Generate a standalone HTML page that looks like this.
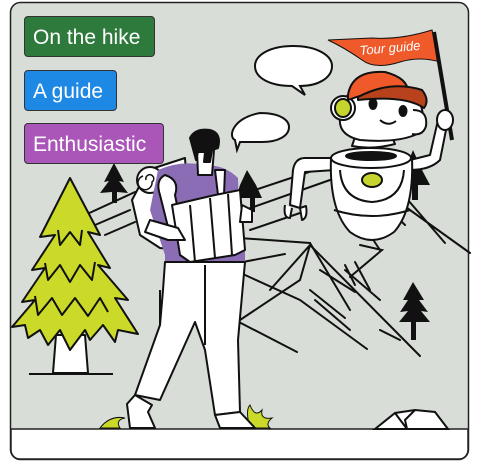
<!DOCTYPE html>
<html><head><style>
html,body{margin:0;padding:0;background:#fff;}
body{width:482px;height:464px;position:relative;overflow:hidden;font-family:"Liberation Sans",sans-serif;}
.lbl{position:absolute;left:24px;height:41px;border:1.5px solid #333;border-radius:4px;color:#fff;font-size:21px;line-height:41px;padding:0 8px;box-sizing:border-box;}
</style></head><body>
<svg width="482" height="464" style="position:absolute;left:0;top:0" xmlns="http://www.w3.org/2000/svg">
<rect x="10.5" y="2.5" width="458" height="457" rx="10" fill="#d8ded7" stroke="#222" stroke-width="1.5"/>
<path d="M11 429 H468 V450 a9 9 0 0 1 -9 9 H20 a9 9 0 0 1 -9 -9 Z" fill="#fff" stroke="#222" stroke-width="1.5"/>
<g stroke="#111" stroke-width="2" fill="none" stroke-linecap="round">
<path d="M85 215 L135 192 M95 225 L130 210 M105 235 L135 222"/>
<path d="M240 195 L330 165 M245 210 L330 180 M250 230 L300 213"/>
<path d="M225 237 L310 243 L350 310 M227 265 L285 254 M270 290 L310 245 L300 280 L240 320"/>
<path d="M245 275 L300 300 L367 349 M235 320 L297 352 M310 245 L420 356 M310 290 L345 318 M320 270 L355 292 M315 300 L350 330 M345 270 L380 300 M380 330 L400 340"/>
<path d="M382 190 L470 253 M395 185 L445 243 M390 210 L405 225 M370 235 L380 250 M360 245 L382 250 L350 277"/>
<path d="M345 265 L355 285 M355 262 L370 290"/>
</g>
<path d="M114 163 L104 182 L109 181 L100 193 L112 192 L112 203 L117 203 L117 192 L128 193 L119 181 L124 182 Z" fill="#111"/>
<path d="M413 282 L403 300 L408 300 L400 312 L408 311 L399 322 L411 322 L411 340 L416 340 L416 322 L430 322 L421 311 L428 312 L419 300 L424 300 Z" fill="#111"/>
<path d="M413 150 L405 170 L400 185 L412 185 L412 200 L418 200 L418 185 L430 185 L422 170 Z" fill="#111"/>
<path d="M247 170 L240 185 L236 198 L250 198 L250 212 L255 212 L255 198 L262 198 L256 185 Z" fill="#111"/>
<g stroke="#111" stroke-width="2" stroke-linejoin="round">
<path d="M56 335 L53 373 L88 373 L85 335 Z" fill="#fff"/>
<path d="M70 178 L100 235 L88 232 L110 268 L98 265 L128 300 L115 298 L138 334 L118 330 L115 342 L103 325 L90 340 L85 330 L70 350 L60 330 L48 345 L40 330 L28 338 L25 325 L12 327 L35 300 L22 302 L45 268 L32 270 L55 235 L40 237 Z" fill="#cbd928"/>
<path d="M58 230 L60 245 L70 232 L80 245 L82 230 M45 263 L48 280 L60 265 L70 282 L80 265 L92 280 L95 262 M35 296 L38 315 L52 298 L62 315 L75 298 L88 316 L100 298 L108 312" fill="none"/>
<path d="M29 374 H113" fill="none"/>
</g>
<path d="M100 428 Q110 415 125 418 Q115 420 120 428 Z M250 428 Q245 410 250 405 Q255 418 262 410 Q260 420 272 418 Q265 424 270 428 Z" fill="#cbd928" stroke="#111" stroke-width="1"/>
<path d="M375 429 L395 413 L415 410 L435 412 L448 429 Z M395 413 L407 429 M407 429 L405 420 L415 410" fill="#fff" stroke="#111" stroke-width="2"/>
<g stroke="#111" stroke-width="2" stroke-linejoin="round">
<path d="M148 170 L185 158 L190 230 L180 250 L160 248 L140 235 L132 200 Z" fill="#fff"/>
<circle cx="150" cy="180" r="13" fill="#fff"/>
<path d="M146 180 a4 4 0 1 1 6 2 a7 7 0 1 1 -9 -6" fill="none" stroke-width="1.5"/>
<path d="M165 250 L245 250 L245 262 L165 262 Z" fill="#8a6db5" stroke="none"/>
<path d="M165 262 L245 262 L238 340 L240 412 L215 415 L205 350 L195 322 L160 400 L135 395 L160 325 L163 290 Z" fill="#fff"/>
<path d="M205 265 L205 345 M160 325 L160 290" fill="none"/>
<path d="M135 395 L127 404 L130 428 L155 428 L148 412 L152 405 Z M215 415 L220 428 L255 428 L240 412 Z" fill="#fff"/>
<path d="M158 170 Q180 160 205 165 Q225 165 238 178 L240 250 L165 255 L150 210 Z" fill="#8a6db5" stroke="none"/>
<path d="M197 150 L198 175 L212 175 L214 150 Z" fill="#fff"/>
<path d="M190 138 Q195 128 210 130 Q222 133 218 148 L212 150 L210 162 L204 162 L205 152 L198 152 L196 160 Z" fill="#111"/>
<path d="M165 175 Q155 180 160 195 L170 235 L182 230 L175 195 Q180 180 165 175 Z" fill="#fff"/>
<path d="M215 170 L225 170 L224 195 L218 195 Z" fill="#fff"/>
<path d="M172 205 L215 195 L240 190 L245 250 L235 255 L190 262 L180 255 Z" fill="#fff"/>
<path d="M190 205 L195 262 M210 198 L215 258 M228 194 L232 255" fill="none"/>
<path d="M150 220 L178 228 L185 240 L168 240 L145 232 Z" fill="#fff"/>
<path d="M242 205 L252 210 L252 222 L240 222 Z" fill="#fff"/>
</g>
<path d="M293 46 C318 46 332 56 332 66 C332 78 318 86 300 86 L305 95 L292 86 C270 86 255 78 255 66 C255 55 270 46 293 46 Z" fill="#fff" stroke="#111" stroke-width="2"/>
<path d="M260 113 C280 113 289 120 289 127 C289 136 278 142 262 142 L240 142 L237 150 L235 140 C228 137 232 118 260 113 Z" fill="#fff" stroke="#111" stroke-width="2"/>
<path d="M328 40 L372 38 Q400 40 432 30 L440 62 Q420 56 400 62 Q375 70 362 60 Q345 48 328 40 Z" fill="#f05a2a" stroke="#111" stroke-width="1"/>
<text x="360" y="55" font-family="Liberation Sans,sans-serif" font-style="italic" font-size="13" fill="#fff" transform="rotate(-5 360 55)">Tour guide</text>
<path d="M434 32 L452 140" stroke="#111" stroke-width="4"/>
<g stroke="#111" stroke-width="2" stroke-linejoin="round">
<path d="M410 170 Q430 170 440 160 L447 125 L438 120 L430 155 L410 160 Z" fill="#fff"/>
<ellipse cx="445" cy="120" rx="8" ry="10" fill="#fff"/>
<path d="M335 158 L305 158 Q295 158 293 170 L290 205 L300 208 L305 172 L335 170 Z" fill="#fff"/>
<path d="M285 205 Q283 218 290 218 L292 208 M300 208 L302 220 Q308 218 306 206 Z" fill="#fff"/>
<path d="M331 158 Q329 210 350 232 Q372 248 394 232 Q414 210 412 158 Z" fill="#fff"/>
<ellipse cx="371" cy="158" rx="40" ry="10" fill="#fff"/>
<ellipse cx="371" cy="156" rx="25" ry="4" fill="#111"/>
<path d="M340 170 Q342 200 372 202 Q402 200 404 170" fill="none"/>
<path d="M334 210 Q372 222 410 210" fill="none"/>
<ellipse cx="372" cy="180" rx="10" ry="7" fill="#c6d52d"/>
<path d="M355 137 L352 146 Q372 150 395 144 L392 137 Z" fill="#fff"/>
<path d="M345 100 Q348 88 375 90 Q410 90 420 103 Q428 125 415 135 Q395 143 360 140 Q338 135 340 118 Z" fill="#fff"/>
<path d="M413 110 Q428 110 426 126 Q423 136 412 134" fill="#fff"/>
<circle cx="343" cy="108" r="12" fill="#fff"/>
<ellipse cx="343" cy="108" rx="8" ry="9" fill="#c6d52d"/>
<path d="M348 95 Q352 70 385 72 Q408 78 408 92 Q380 88 348 100 Z" fill="#f05a2a"/>
<path d="M358 97 Q390 80 422 90 Q430 100 424 108 Q405 95 358 100 Z" fill="#b8421c"/>
<ellipse cx="373" cy="104" rx="3.5" ry="5" fill="#111"/>
<ellipse cx="403" cy="111" rx="3.5" ry="5" fill="#111"/>
<path d="M380 120 Q388 127 396 121" fill="none"/>
</g>
</svg>
<div class="lbl" style="top:16px;width:131px;background:#2e7a3c">On the hike</div>
<div class="lbl" style="top:70px;width:93px;background:#1e88e5">A guide</div>
<div class="lbl" style="top:123px;width:140px;background:#aa55b8">Enthusiastic</div>
</body></html>
